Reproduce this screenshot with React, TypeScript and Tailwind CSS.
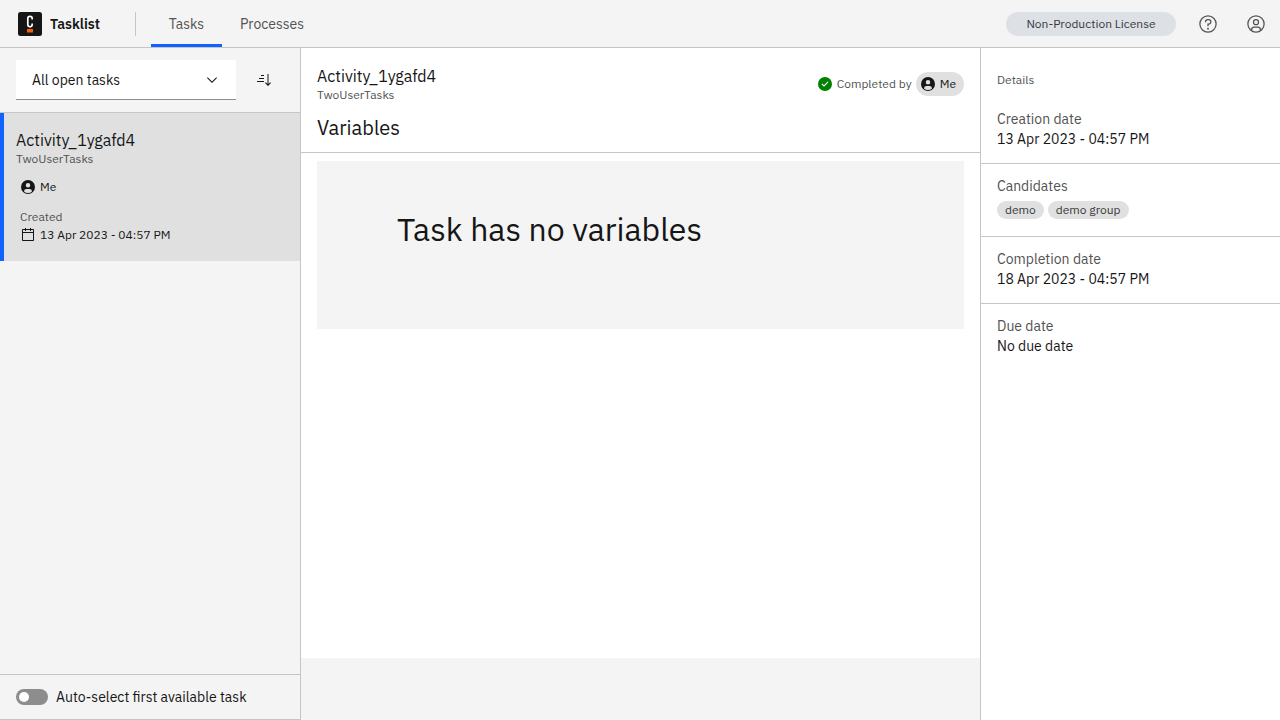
import type { ReactNode } from "react";

type IconProps = { size?: string; children: ReactNode };

function Icon({ size = "size-4", children }: IconProps) {
  return (
    <svg viewBox="0 0 32 32" fill="currentColor" aria-hidden="true" className={`${size} shrink-0`}>
      {children}
    </svg>
  );
}

function HelpIcon() {
  return (
    <Icon size="size-5">
      <path d="M16,2A14,14,0,1,0,30,16,14,14,0,0,0,16,2Zm0,26A12,12,0,1,1,28,16,12,12,0,0,1,16,28Z" />
      <circle cx="16" cy="23.5" r="1.5" />
      <path d="M17,8H15.5A4.49,4.49,0,0,0,11,12.5V13h2v-.5A2.5,2.5,0,0,1,15.5,10H17a2.5,2.5,0,0,1,0,5H15v4.5h2V17a4.5,4.5,0,0,0,0-9Z" />
    </Icon>
  );
}

function AvatarIcon() {
  return (
    <Icon size="size-5">
      <path d="M16,8a5,5,0,1,0,5,5A5,5,0,0,0,16,8Zm0,8a3,3,0,1,1,3-3A3,3,0,0,1,16,16Z" />
      <path d="M16,2A14,14,0,1,0,30,16,14,14,0,0,0,16,2ZM10,26.3765V25a3,3,0,0,1,3-3h6a3,3,0,0,1,3,3v1.3765a11.8989,11.8989,0,0,1-12,0Zm13.9925-1.4507A5,5,0,0,0,19,20H13a5,5,0,0,0-4.9925,4.9258,12,12,0,1,1,15.985,0Z" />
    </Icon>
  );
}

function AvatarFilledIcon() {
  return (
    <Icon>
      <path
        fillRule="evenodd"
        d="M16,2A14,14,0,1,0,30,16,14,14,0,0,0,16,2ZM16,8a4.5,4.5,0,1,1-4.5,4.5A4.5,4.5,0,0,1,16,8ZM8.0071,24.93A4.9957,4.9957,0,0,1,13,20h6a4.9958,4.9958,0,0,1,4.9929,4.93,11.94,11.94,0,0,1-15.9858,0Z"
      />
    </Icon>
  );
}

function CalendarIcon() {
  return (
    <Icon>
      <path d="M26,4h-4V2h-2v2h-8V2h-2v2H6C4.9,4,4,4.9,4,6v20c0,1.1,0.9,2,2,2h20c1.1,0,2-0.9,2-2V6C28,4.9,27.1,4,26,4z M26,26H6V12h20V26z M26,10H6V6h4v2h2V6h8v2h2V6h4V10z" />
    </Icon>
  );
}

function SortIcon() {
  return (
    <Icon>
      <path d="M18,22l1.4-1.4,3.6,3.6V4h2v20.2l3.6-3.6L30,22l-6,6Z" />
      <path d="M2,18h14v2H2ZM6,12h10v2H6ZM10,6h6v2h-6Z" />
    </Icon>
  );
}

function CheckIcon() {
  return (
    <Icon>
      <path
        fillRule="evenodd"
        d="M16,2A14,14,0,1,0,30,16,14,14,0,0,0,16,2ZM14,21.5908l-5-5L10.5906,15,14,18.4092,21.41,11l1.5957,1.5859Z"
      />
    </Icon>
  );
}

function Logo() {
  return (
    <svg viewBox="0 0 24 24" className="size-6 shrink-0" aria-hidden="true">
      <rect width="24" height="24" rx="2.5" fill="#161616" />
      <path
        d="M14.2 7.4V6.5a2.2 2.2 0 0 0-4.4 0v6.1a2.2 2.2 0 0 0 4.4 0v-1"
        fill="none"
        stroke="#fff"
        strokeWidth="1.7"
      />
      <rect x="9" y="17" width="6" height="3.5" fill="#fc5d0d" />
    </svg>
  );
}

const headerIcons = [
  { label: "Help", icon: <HelpIcon /> },
  { label: "Account", icon: <AvatarIcon /> },
];

function Header() {
  return (
    <header className="flex h-12 shrink-0 items-stretch border-b border-[#c6c6c6] bg-[#f4f4f4]">
      <a href="#home" className="flex w-[135px] items-center gap-2 pl-[18px] font-semibold">
        <Logo />
        Tasklist
      </a>
      <div className="h-6 w-px self-center bg-[#c6c6c6]" />
      <nav className="ml-[15px] flex text-[#525252]">
        <a
          href="#tasks"
          aria-current="page"
          className="flex w-[71px] items-center justify-center border-b-3 border-[#0f62fe] pt-[3px]"
        >
          Tasks
        </a>
        <a href="#processes" className="flex items-center px-[18px]">
          Processes
        </a>
      </nav>
      <div className="ml-auto flex items-center">
        <span className="mr-2 flex h-6 w-[170px] items-center justify-center rounded-full bg-[#dde1e6] text-xs text-[#343a3f]">
          Non-Production License
        </span>
        {headerIcons.map(({ label, icon }) => (
          <button
            key={label}
            type="button"
            aria-label={label}
            className="flex size-12 items-center justify-center text-[#525252]"
          >
            {icon}
          </button>
        ))}
      </div>
    </header>
  );
}

function TaskList() {
  return (
    <aside className="flex w-[301px] shrink-0 flex-col border-r border-[#c6c6c6] bg-[#f4f4f4]">
      <div className="flex items-center justify-between border-b border-[#c6c6c6] px-4 py-3">
        <div className="relative w-[220px]">
          <select
            aria-label="Filter tasks"
            className="h-10 w-full appearance-none border-b border-[#8d8d8d] bg-white px-4"
          >
            <option>All open tasks</option>
            <option>Assigned to me</option>
            <option>Unassigned</option>
            <option>Completed</option>
          </select>
          <svg
            viewBox="0 0 16 16"
            fill="currentColor"
            aria-hidden="true"
            className="pointer-events-none absolute top-3 right-4 size-4"
          >
            <path d="M8 11 3 6l.7-.7L8 9.6l4.3-4.3.7.7z" />
          </svg>
        </div>
        <button type="button" aria-label="Sort tasks" className="flex h-8 w-10 items-center justify-center">
          <SortIcon />
        </button>
      </div>

      <ul className="flex-1">
        <li>
          <a
            href="#task"
            className="block border-l-4 border-[#0f62fe] bg-[#e0e0e0] pt-4 pr-4 pb-[18px] pl-3 text-xs"
          >
            <span className="block text-base leading-[22px]">Activity_1ygafd4</span>
            <span className="block leading-4 text-[#525252]">TwoUserTasks</span>
            <span className="mt-3 flex items-center gap-1 pl-1 leading-4">
              <AvatarFilledIcon />
              Me
            </span>
            <span className="mt-[14px] block pl-1 leading-4 text-[#525252]">Created</span>
            <span className="mt-[2px] flex items-center gap-1 pl-1 leading-4">
              <CalendarIcon />
              13 Apr 2023 - 04:57 PM
            </span>
          </a>
        </li>
      </ul>

      <label className="flex h-[46px] items-center gap-2 border-y border-[#c6c6c6] px-4">
        <input
          type="checkbox"
          role="switch"
          className="h-4 w-8 appearance-none rounded-full bg-[#8d8d8d] p-[3px] before:block before:size-[10px] before:rounded-full before:bg-white checked:bg-[#24a148] checked:before:ml-4"
        />
        Auto-select first available task
      </label>
    </aside>
  );
}

function TaskDetail() {
  return (
    <main className="flex min-w-0 flex-1 flex-col bg-white">
      <div className="border-b border-[#c6c6c6] px-4 pt-[17px] pb-[9px]">
        <div className="flex items-center justify-between">
          <div>
            <h1 className="text-base leading-[22px]">Activity_1ygafd4</h1>
            <p className="text-xs leading-4 text-[#525252]">TwoUserTasks</p>
          </div>
          <div className="flex items-center gap-1 text-xs text-[#525252]">
            <span className="text-[#008000]">
              <CheckIcon />
            </span>
            Completed by
            <span className="flex h-6 items-center gap-1 rounded-full bg-[#e0e0e0] pr-2 pl-1 text-[#161616]">
              <AvatarFilledIcon />
              Me
            </span>
          </div>
        </div>
        <h2 className="mt-[10px] text-xl leading-[30px]">Variables</h2>
      </div>
      <div className="flex-1 px-4 pt-2">
        <div className="h-[168px] bg-[#f4f4f4] px-20 pt-12">
          <h3 className="text-[32px] leading-10">Task has no variables</h3>
        </div>
      </div>
      <footer className="h-[62px] shrink-0 bg-[#f4f4f4]" />
    </main>
  );
}

function Chip({ children }: { children: ReactNode }) {
  return (
    <span className="flex h-[18px] items-center rounded-full bg-[#e0e0e0] px-2 text-xs text-[#393939]">
      {children}
    </span>
  );
}

const details = [
  { label: "Creation date", value: "13 Apr 2023 - 04:57 PM" },
  { label: "Candidates", chips: ["demo", "demo group"] },
  { label: "Completion date", value: "18 Apr 2023 - 04:57 PM" },
  { label: "Due date", value: "No due date" },
];

function DetailsPanel() {
  return (
    <aside className="w-[300px] shrink-0 border-l border-[#c6c6c6] bg-white">
      <h2 className="px-4 pt-6 pb-[9px] text-xs leading-4 text-[#525252]">Details</h2>
      <dl>
        {details.map(({ label, value, chips }) => (
          <div key={label} className="border-b border-[#c6c6c6] px-4 pt-3 pb-[14px] leading-5 last:border-b-0">
            <dt className="text-[#525252]">{label}</dt>
            {chips ? (
              <dd className="flex gap-1 pt-[5px] pb-[3px]">
                {chips.map((chip) => (
                  <Chip key={chip}>{chip}</Chip>
                ))}
              </dd>
            ) : (
              <dd>{value}</dd>
            )}
          </div>
        ))}
      </dl>
    </aside>
  );
}

export default function App() {
  return (
    <div className="flex h-screen flex-col font-['IBM_Plex_Sans','Noto_Sans',sans-serif] text-sm text-[#161616]">
      <Header />
      <div className="flex min-h-0 flex-1">
        <TaskList />
        <TaskDetail />
        <DetailsPanel />
      </div>
    </div>
  );
}
